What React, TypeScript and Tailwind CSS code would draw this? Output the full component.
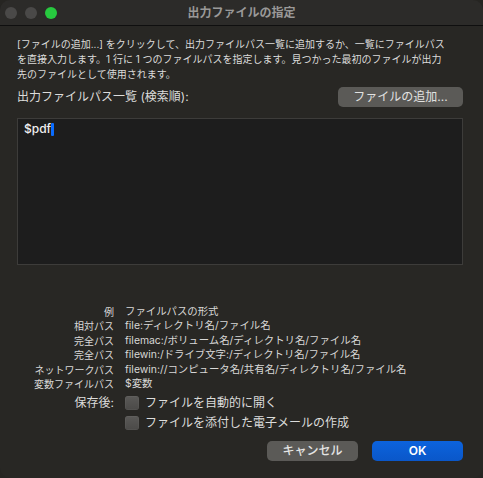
import React from "react";

const font = { fontFamily: 'Inter, "Noto Sans CJK JP", sans-serif' };

function Checkbox() {
  return (
    <div className="w-[14px] h-[14px] rounded-[3px] bg-gradient-to-b from-[#5a5957] to-[#4b4a48] shadow-[inset_0_0_0_0.5px_rgba(255,255,255,0.08)]" />
  );
}

const rows: [string, string][] = [
  ["例", "ファイルパスの形式"],
  ["相対パス", "file:ディレクトリ名/ファイル名"],
  ["完全パス", "filemac:/ボリューム名/ディレクトリ名/ファイル名"],
  ["完全パス", "filewin:/ドライブ文字:/ディレクトリ名/ファイル名"],
  ["ネットワークパス", "filewin://コンピュータ名/共有名/ディレクトリ名/ファイル名"],
  ["変数ファイルパス", "$変数"],
];

export default function App() {
  return (
    <div className="w-[483px] h-[478px] bg-[#262522] overflow-hidden" style={font}>
      <div className="w-full h-full flex flex-col bg-[#282724] rounded-[10px] overflow-hidden">
        {/* title bar */}
        <div className="relative h-[26px] shrink-0 bg-[#2c2b29] border-b border-[#0f0f0f] flex items-center">
          <div className="flex items-center gap-[8px] pl-[5px]">
            <div className="w-[12px] h-[12px] rounded-full bg-[#4a4948]" />
            <div className="w-[12px] h-[12px] rounded-full bg-[#4a4948]" />
            <div className="w-[12px] h-[12px] rounded-full bg-[#27c93f]" />
          </div>
          <div className="absolute inset-0 flex items-center justify-center text-[12px] font-semibold text-[#9a9998]">
            出力ファイルの指定
          </div>
        </div>

        <div className="flex flex-col pl-[17px] pr-[20px] pt-[11px]">
          <div className="text-[10px] leading-[15px] text-[#dcdcdb] whitespace-nowrap">
            <div>[ファイルの追加...] をクリックして、出力ファイルパス一覧に追加するか、一覧にファイルパス</div>
            <div>を直接入力します。1 行に 1 つのファイルパスを指定します。見つかった最初のファイルが出力</div>
            <div>先のファイルとして使用されます。</div>
          </div>

          <div className="mt-[5px] flex items-center justify-between h-[20px]">
            <div className="text-[12px] text-[#dcdcdb]">出力ファイルパス一覧 (検索順):</div>
            <button className="w-[125px] h-[20px] rounded-[5px] bg-[#5b5a57] text-[12px] text-[#e2e2e1] flex items-center justify-center">
              ファイルの追加...
            </button>
          </div>

          <div className="mt-[11px] h-[147px] bg-[#1d1d1d] border border-[#3d3c3a] px-[6px] pt-[2px]">
            <div className="flex items-center h-[14px] mt-[1px] text-[12px] text-[#f0f0f0] font-medium">
              <span>$pdf</span>
              <span className="inline-block w-[3px] h-[13px] bg-[#0a6cff] rounded-[1px]" />
            </div>
          </div>

          <div className="mt-[40px] text-[10px] text-[#d8d8d7]">
            {rows.map(([a, b], i) => (
              <div key={i} className="flex items-center h-[14.4px] leading-[14.4px]">
                <div className="w-[97px] text-right shrink-0">{a}</div>
                <div className="pl-[11px] whitespace-nowrap text-[10.4px] leading-[14.4px]">{b}</div>
              </div>
            ))}
          </div>

          <div className="mt-[2px] flex flex-col text-[12px] text-[#dcdcdb]">
            <div className="flex items-center h-[20px]">
              <div className="w-[97px] text-right shrink-0">保存後:</div>
              <div className="pl-[11px] flex items-center gap-[6px]">
                <Checkbox />
                <span>ファイルを自動的に開く</span>
              </div>
            </div>
            <div className="flex items-center h-[20px]">
              <div className="w-[97px] shrink-0" />
              <div className="pl-[11px] flex items-center gap-[6px]">
                <Checkbox />
                <span>ファイルを添付した電子メールの作成</span>
              </div>
            </div>
          </div>

          <div className="mt-[8px] flex justify-end gap-[14px]">
            <button className="w-[91px] h-[20px] rounded-[5px] bg-[#5b5a57] text-[12px] font-medium text-[#e4e4e3] flex items-center justify-center">
              キャンセル
            </button>
            <button className="w-[91px] h-[20px] rounded-[5px] bg-gradient-to-b from-[#0c63dd] to-[#0a57c9] text-[12px] font-semibold text-white flex items-center justify-center">
              OK
            </button>
          </div>
        </div>
      </div>
    </div>
  );
}
